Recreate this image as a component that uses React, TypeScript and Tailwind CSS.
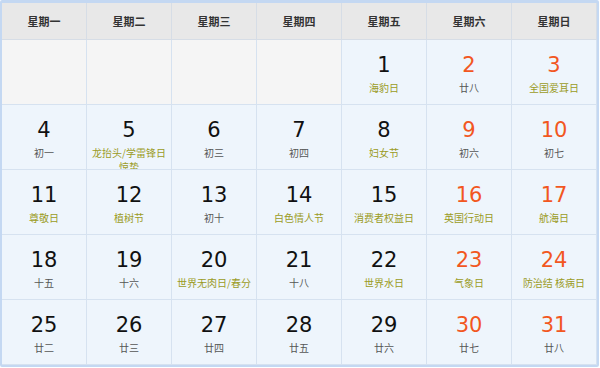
import React from 'react';

type Day = { n: number; sub: string; fest?: boolean } | null;

const weekDays = ['星期一', '星期二', '星期三', '星期四', '星期五', '星期六', '星期日'];

const weeks: Day[][] = [
    [null, null, null, null,
        { n: 1, sub: '海豹日', fest: true },
        { n: 2, sub: '廿八' },
        { n: 3, sub: '全国爱耳日', fest: true }],
    [{ n: 4, sub: '初一' },
        { n: 5, sub: '龙抬头/学雷锋日 惊蛰', fest: true },
        { n: 6, sub: '初三' },
        { n: 7, sub: '初四' },
        { n: 8, sub: '妇女节', fest: true },
        { n: 9, sub: '初六' },
        { n: 10, sub: '初七' }],
    [{ n: 11, sub: '尊敬日', fest: true },
        { n: 12, sub: '植树节', fest: true },
        { n: 13, sub: '初十' },
        { n: 14, sub: '白色情人节', fest: true },
        { n: 15, sub: '消费者权益日', fest: true },
        { n: 16, sub: '英国行动日', fest: true },
        { n: 17, sub: '航海日', fest: true }],
    [{ n: 18, sub: '十五' },
        { n: 19, sub: '十六' },
        { n: 20, sub: '世界无肉日/春分', fest: true },
        { n: 21, sub: '十八' },
        { n: 22, sub: '世界水日', fest: true },
        { n: 23, sub: '气象日', fest: true },
        { n: 24, sub: '防治结 核病日', fest: true }],
    [{ n: 25, sub: '廿二' },
        { n: 26, sub: '廿三' },
        { n: 27, sub: '廿四' },
        { n: 28, sub: '廿五' },
        { n: 29, sub: '廿六' },
        { n: 30, sub: '廿七' },
        { n: 31, sub: '廿八' }],
];

function DayCell({ day, weekend }: { day: Day; weekend: boolean }) {
    if (!day) {
        return <div className="h-[65px] bg-[#f5f5f5] border-r border-b border-[#d6e2f0]" />;
    }
    return (
        <div className="h-[65px] overflow-hidden bg-[#eef5fc] border-r border-b border-[#d6e2f0] flex flex-col items-center pt-[13px] px-[2px]">
            <div className={`text-[21px] leading-[24px] font-['DejaVu_Sans',sans-serif] ${weekend ? 'text-[#f2571f]' : 'text-[#111]'}`}>
                {day.n}
            </div>
            <div className={`mt-[4px] text-[10px] leading-[14px] text-center ${day.fest ? 'text-[#9b9b1e]' : 'text-[#555]'}`}>
                {day.sub}
            </div>
        </div>
    );
}

export default function App() {
    return (
        <div className="w-[600px] h-[368px] bg-white font-['Noto_Sans_CJK_SC',sans-serif]">
            <div className="w-[599px] border-x-2 border-t-[3px] border-b-2 border-[#c4d8f2] rounded-[2px]">
                <div className="grid grid-cols-7">
                    {weekDays.map((w) => (
                        <div key={w} className="h-[37px] bg-[#e8e8e8] border-r border-b border-[#d6dde6] flex items-center justify-center text-[11px] font-bold text-[#333]">
                            {w}
                        </div>
                    ))}
                    {weeks.map((week, i) =>
                        week.map((d, j) => <DayCell key={`${i}-${j}`} day={d} weekend={j >= 5} />)
                    )}
                </div>
            </div>
        </div>
    );
}
